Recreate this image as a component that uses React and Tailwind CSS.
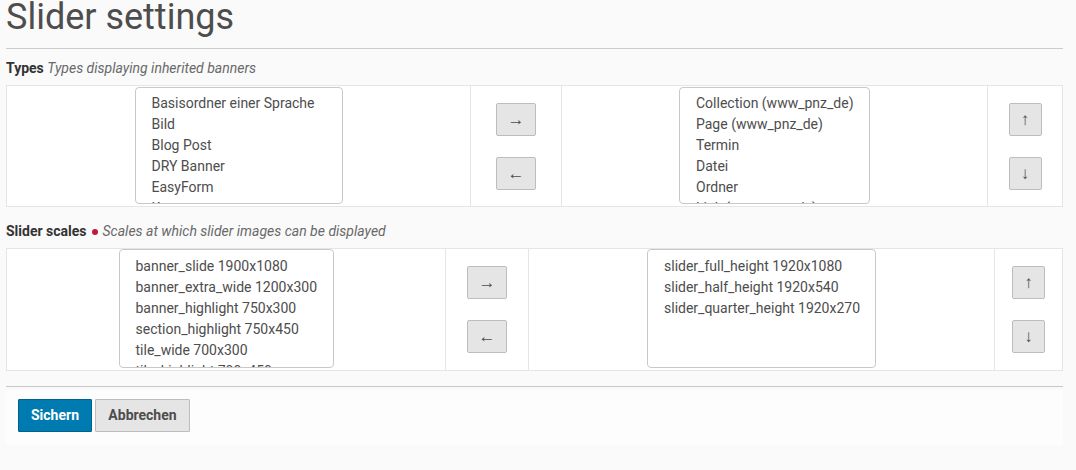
import React from "react";

const font = { fontFamily: "Roboto, 'Noto Sans', 'Liberation Sans', sans-serif" };

function ListBox({ items, className }) {
  return (
    <div
      className={
        "bg-white border border-[#c8c8c8] rounded-[4px] overflow-hidden pl-[16px] text-[14px] leading-[21px] text-[#4d4d4d] " +
        className
      }
    >
      {items.map((t) => (
        <div key={t} className="whitespace-nowrap">
          {t}
        </div>
      ))}
    </div>
  );
}

function Btn({ children, className }) {
  return (
    <button
      className={
        "flex items-center justify-center bg-[#e5e5e5] border border-[#bdbdbd] rounded-[2px] text-[17px] text-[#4d4d4d] leading-none " +
        className
      }
    >
      {children}
    </button>
  );
}

export default function App() {
  return (
    <div className="min-h-[470px] bg-[#fafafa]" style={font}>
      <div className="ml-[6px] w-[1057px]">
        <h1 className="text-[36px] leading-[35px] font-normal text-[#4d4d4d] m-0">
          Slider settings
        </h1>
        <div className="mt-[13px] h-px bg-[#cccccc]" />

        <div className="mt-[9px] mb-[7px] text-[14px] leading-[20px] text-[#4d4d4d]">
          <span className="font-bold text-[#333]">Types</span>{" "}
          <span className="italic text-[#696969]">Types displaying inherited banners</span>
        </div>
        <div className="flex border border-[#e5e5e5] bg-white h-[122px]">
          <div className="w-[463px] flex justify-center pt-[1px]">
            <ListBox
              className="w-[208px] h-[117px] pt-[5px]"
              items={[
                "Basisordner einer Sprache",
                "Bild",
                "Blog Post",
                "DRY Banner",
                "EasyForm",
                "Kommentar",
              ]}
            />
          </div>
          <div className="w-[91px] border-l border-[#e5e5e5] flex flex-col items-center justify-center gap-[21px]">
            <Btn className="w-[40px] h-[33px]">→</Btn>
            <Btn className="w-[40px] h-[33px]">←</Btn>
          </div>
          <div className="w-[426px] border-l border-[#e5e5e5] flex justify-center pt-[1px]">
            <ListBox
              className="w-[191px] h-[117px] pt-[5px]"
              items={[
                "Collection (www_pnz_de)",
                "Page (www_pnz_de)",
                "Termin",
                "Datei",
                "Ordner",
                "Link (www_pnz_de)",
              ]}
            />
          </div>
          <div className="w-[75px] border-l border-[#e5e5e5] flex flex-col items-center justify-center gap-[21px]">
            <Btn className="w-[33px] h-[33px]">↑</Btn>
            <Btn className="w-[33px] h-[33px]">↓</Btn>
          </div>
        </div>

        <div className="mt-[14px] mb-[7px] text-[14px] leading-[20px] text-[#4d4d4d] flex items-center">
          <span className="font-bold text-[#333]">Slider scales</span>
          <span className="inline-block w-[6px] h-[6px] rounded-full bg-[#c4183c] mx-[5px] mt-[2px]" />
          <span className="italic text-[#696969]">Scales at which slider images can be displayed</span>
        </div>
        <div className="flex border border-[#e5e5e5] bg-white h-[123px]">
          <div className="w-[438px] flex justify-center">
            <ListBox
              className="w-[215px] h-[119px] pt-[6px]"
              items={[
                "banner_slide 1900x1080",
                "banner_extra_wide 1200x300",
                "banner_highlight 750x300",
                "section_highlight 750x450",
                "tile_wide 700x300",
                "tile_highlight 700x450",
              ]}
            />
          </div>
          <div className="w-[83px] border-l border-[#e5e5e5] flex flex-col items-center justify-center gap-[21px]">
            <Btn className="w-[40px] h-[33px]">→</Btn>
            <Btn className="w-[40px] h-[33px]">←</Btn>
          </div>
          <div className="w-[466px] border-l border-[#e5e5e5] flex justify-center">
            <ListBox
              className="w-[229px] h-[119px] pt-[6px]"
              items={[
                "slider_full_height 1920x1080",
                "slider_half_height 1920x540",
                "slider_quarter_height 1920x270",
              ]}
            />
          </div>
          <div className="w-[68px] border-l border-[#e5e5e5] flex flex-col items-center justify-center gap-[21px]">
            <Btn className="w-[33px] h-[33px]">↑</Btn>
            <Btn className="w-[33px] h-[33px]">↓</Btn>
          </div>
        </div>

        <div className="mt-[15px] h-px bg-[#c8c8c8]" />
        <div className="bg-[#fdfdfd] shadow-[inset_0_4px_4px_-3px_rgba(0,0,0,0.04)] pt-[12px] pb-[13px] pl-[12px] flex gap-[3px]">
          <button className="w-[74px] h-[33px] bg-[#007bb1] border border-[#00618a] rounded-[1px] text-white font-bold text-[14px]">
            Sichern
          </button>
          <button className="w-[95px] h-[33px] bg-[#e5e5e5] border border-[#bdbdbd] rounded-[1px] text-[#4d4d4d] font-bold text-[14px]">
            Abbrechen
          </button>
        </div>
      </div>
    </div>
  );
}
